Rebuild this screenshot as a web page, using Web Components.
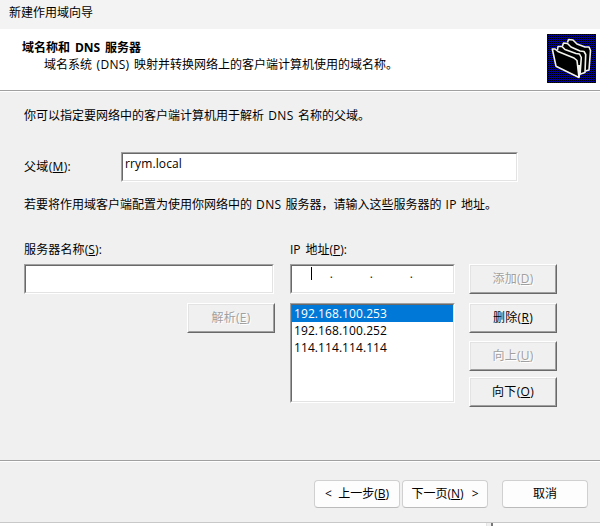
<!DOCTYPE html>
<html lang="zh-CN"><head><meta charset="utf-8"><title>新建作用域向导</title>
<style>
html,body{margin:0;width:600px;height:526px;overflow:hidden;background:#fff}
body{font:12px/16px "Open Sans","Noto Sans CJK SC",sans-serif;color:#000}
</style></head><body>
<scope-wizard></scope-wizard>
<script>
const define=(name,html)=>customElements.define(name,class extends HTMLElement{
  constructor(){super();this.attachShadow({mode:'open'}).innerHTML=html;}
});

/* One line of text; "width" is its advance, reached through the spaces, or the letters if it has none */
customElements.define('ui-text',class extends HTMLElement{
  constructor(){
    super();
    this.attachShadow({mode:'open'}).innerHTML=`<style>
      :host{display:block;height:16px;white-space:pre;line-height:16px}
      span{display:inline-block;white-space:pre}
    </style><span><slot></slot></span>`;
  }
  connectedCallback(){
    const w=+this.getAttribute('width');
    if(!w)return;
    const span=this.shadowRoot.querySelector('span');
    const rest=w-span.getBoundingClientRect().width;
    const spaces=this.textContent.split(' ').length-1;
    if(spaces)span.style.wordSpacing=rest/spaces+'px';
    else span.style.letterSpacing=rest/this.textContent.length+'px';
  }
});

define('sunken-box',`<style>
  :host{display:block;box-sizing:border-box;border:1px solid;border-color:#a0a0a0 #fff #fff #a0a0a0;background:#fff}
  div{box-sizing:border-box;height:100%;border:1px solid;border-color:#696969 #e3e3e3 #e3e3e3 #696969}
</style><div><slot></slot></div>`);

define('classic-button',`<style>
  :host{display:block;box-sizing:border-box;width:88px;height:30px;border:1px solid;border-color:#fff #696969 #696969 #fff;background:#f0f0f0}
  div{box-sizing:border-box;height:100%;border:1px solid;border-color:#e3e3e3 #a0a0a0 #a0a0a0 #e3e3e3;display:flex;align-items:center;justify-content:center}
  :host([disabled]){color:#a0a0a0;text-shadow:1px 1px #fff}
</style><div><slot></slot></div>`);

define('modern-button',`<style>
  :host{display:flex;box-sizing:border-box;width:86px;height:28px;border:1px solid #d0d0d0;border-bottom-color:#bbb;border-radius:4px;background:#fdfdfd;align-items:center;justify-content:center}
</style><slot></slot>`);

define('folder-icon',`<style>:host{display:block;width:49px;height:49px}svg{display:block}</style>
<svg width="49" height="49" viewBox="0 0 49 49">
  <defs><pattern id="d" width="2" height="2" patternUnits="userSpaceOnUse"><path fill="#0000a8" d="M0 0h1v1H0zM1 1h1v1H1z"/></pattern></defs>
  <path d="M0 0h49v49H0z"/><path fill="url(#d)" d="M0 0h49v49H0z" shape-rendering="crispEdges"/>
  <g fill="url(#d)" stroke="#f4f4ee" stroke-width="1.6" stroke-linejoin="round">
    <path fill="#000" d="M20.5 8.5L21.5 5.5L26 6L30 10L38 13L42 13L43.5 16.5L42 36L38.5 37"/>
    <path fill="#000" d="M15.5 12L16.5 9L20.5 9.5L24 13L33 17L37 17.5L38.7 20.5L38 38.5L33.5 40"/>
    <path fill="#000" d="M10.5 16L11 12.5L15 12.5L18 15.5L29 19.5L32.5 20L34.3 23.5L33 41"/>
    <path fill="#000" d="M5.3 15H8L11 17.5L27 24L30 26.5L32 43.5L9 32.2Z"/>
  </g><path d="M30.5 31h3.2l-.7 12h-1.6z" fill="#f4f4ee"/>
</svg>`);

define('wizard-header',`<style>
  :host{display:flex;box-sizing:border-box;height:62px;background:#fff;border-bottom:1px solid #a0a0a0;padding:5px 4px 0 22px;justify-content:space-between}
  .copy{padding-top:6px}
  .title{font-weight:700}.sub{margin-left:22px;margin-top:1px}
  abbr{letter-spacing:.3px}
</style><div class="copy"><ui-text class="title" width="119">域名称和 DNS 服务器</ui-text><ui-text class="sub" width="354">域名系统 <abbr>(DNS)</abbr> 映射并转换网络上的客户端计算机使用的域名称。</ui-text></div><folder-icon></folder-icon>`);

define('ip-field',`<style>
  :host{display:block;width:165px;height:30px}
  sunken-box{height:100%}
  .cells{display:grid;grid-template-columns:41px 40px 40px 1fr;height:16px}
  .cells span{display:flex;justify-content:flex-end;line-height:16px;color:#222}
  .cells span:first-child{justify-content:space-between}
  i{width:1px;height:13px;background:#000;margin:1px 0 0 19px}
</style><sunken-box><div class="cells"><span><i></i>.</span><span>.</span><span>.</span></div></sunken-box>`);

define('ip-list',`<style>
  :host{display:block;width:165px;height:100px}
  sunken-box{height:100%}
  .row{height:17px;padding-left:2px}.sel{background:#0078d7;color:#fff}
  .row ui-text{height:17px;line-height:17px}
</style><sunken-box><div class="row sel"><ui-text width="93">192.168.100.253</ui-text></div><div class="row"><ui-text width="93">192.168.100.252</ui-text></div><div class="row"><ui-text width="93">114.114.114.114</ui-text></div></sunken-box>`);

define('wizard-body',`<style>
  :host{display:block;box-sizing:border-box;height:370px;background:#f0f0f0;border-top:1px solid #fff;border-bottom:1px solid #a0a0a0;padding:16px 0 0 24px}
  u{text-underline-offset:1px}
  abbr{letter-spacing:.4px}
  .parent{display:grid;grid-template-columns:97px 397px;margin:28px 0 15px;height:30px}
  .parent>ui-text{padding-top:7px}.parent sunken-box{height:30px}
  .parent sunken-box ui-text{padding-left:2px;margin-top:2px}
  .grid{display:grid;grid-template-columns:266px 179px 88px;margin-top:29px}
  .field{height:30px;margin-top:6px}.name classic-button{margin:9px 0 0 163px}
  .ip ip-field{margin-top:6px}.ip ip-list{margin-top:9px}
  .name .field{width:250px}
  .actions{padding-top:22px}.actions classic-button{margin-bottom:9px}
  .actions classic-button:nth-child(2){margin-bottom:8px}
  .actions classic-button:nth-child(3){margin-bottom:6px}
</style>
<ui-text width="346">你可以指定要网络中的客户端计算机用于解析 <abbr>DNS</abbr> 名称的父域。</ui-text>
<div class="parent"><ui-text width="47">父域(<u>M</u>):</ui-text><sunken-box><ui-text width="57">rrym.local</ui-text></sunken-box></div>
<ui-text width="473">若要将作用域客户端配置为使用你网络中的 <abbr>DNS</abbr> 服务器，请输入这些服务器的 <abbr>IP</abbr> 地址。</ui-text>
<div class="grid">
<div class="name"><ui-text width="78">服务器名称(<u>S</u>):</ui-text><sunken-box class="field"></sunken-box><classic-button disabled><ui-text width="39">解析(<u>E</u>)</ui-text></classic-button></div>
<div class="ip"><ui-text width="57">IP 地址(<u>P</u>):</ui-text><ip-field></ip-field><ip-list></ip-list></div>
<div class="actions"><classic-button disabled><ui-text width="41">添加(<u>D</u>)</ui-text></classic-button><classic-button><ui-text width="40">删除(<u>R</u>)</ui-text></classic-button><classic-button disabled><ui-text width="41">向上(<u>U</u>)</ui-text></classic-button><classic-button><ui-text width="42">向下(<u>O</u>)</ui-text></classic-button></div>
</div>`);

define('wizard-footer',`<style>
  :host{display:flex;box-sizing:border-box;height:62px;background:#f0f0f0;border-top:1px solid #fff;border-bottom:1px solid #c8c8c8;padding:18px 12px 0 0;justify-content:flex-end}
  modern-button{margin-left:2px}modern-button:last-child{margin-left:14px}
  u{text-underline-offset:1px}
</style><modern-button><ui-text width="64">&lt; 上一步(<u>B</u>)</ui-text></modern-button><modern-button><ui-text width="67">下一页(<u>N</u>) &gt;</ui-text></modern-button><modern-button><ui-text width="24">取消</ui-text></modern-button>`);

define('scope-wizard',`<style>
  :host{display:block;width:600px;height:526px}
  .bar{box-sizing:border-box;height:29px;padding:5px 0 0 9px;background:#f3f3f3}
  .under{height:4px;display:flex;padding-left:486px}
  .under i{background:#f0f0f0;border-left:1px solid #e3e3e3;border-right:2px solid #777;box-sizing:border-box;width:7px}
</style><div class="bar"><ui-text width="84">新建作用域向导</ui-text></div><wizard-header></wizard-header><wizard-body></wizard-body><wizard-footer></wizard-footer><div class="under"><i></i></div>`);
</script></body></html>
